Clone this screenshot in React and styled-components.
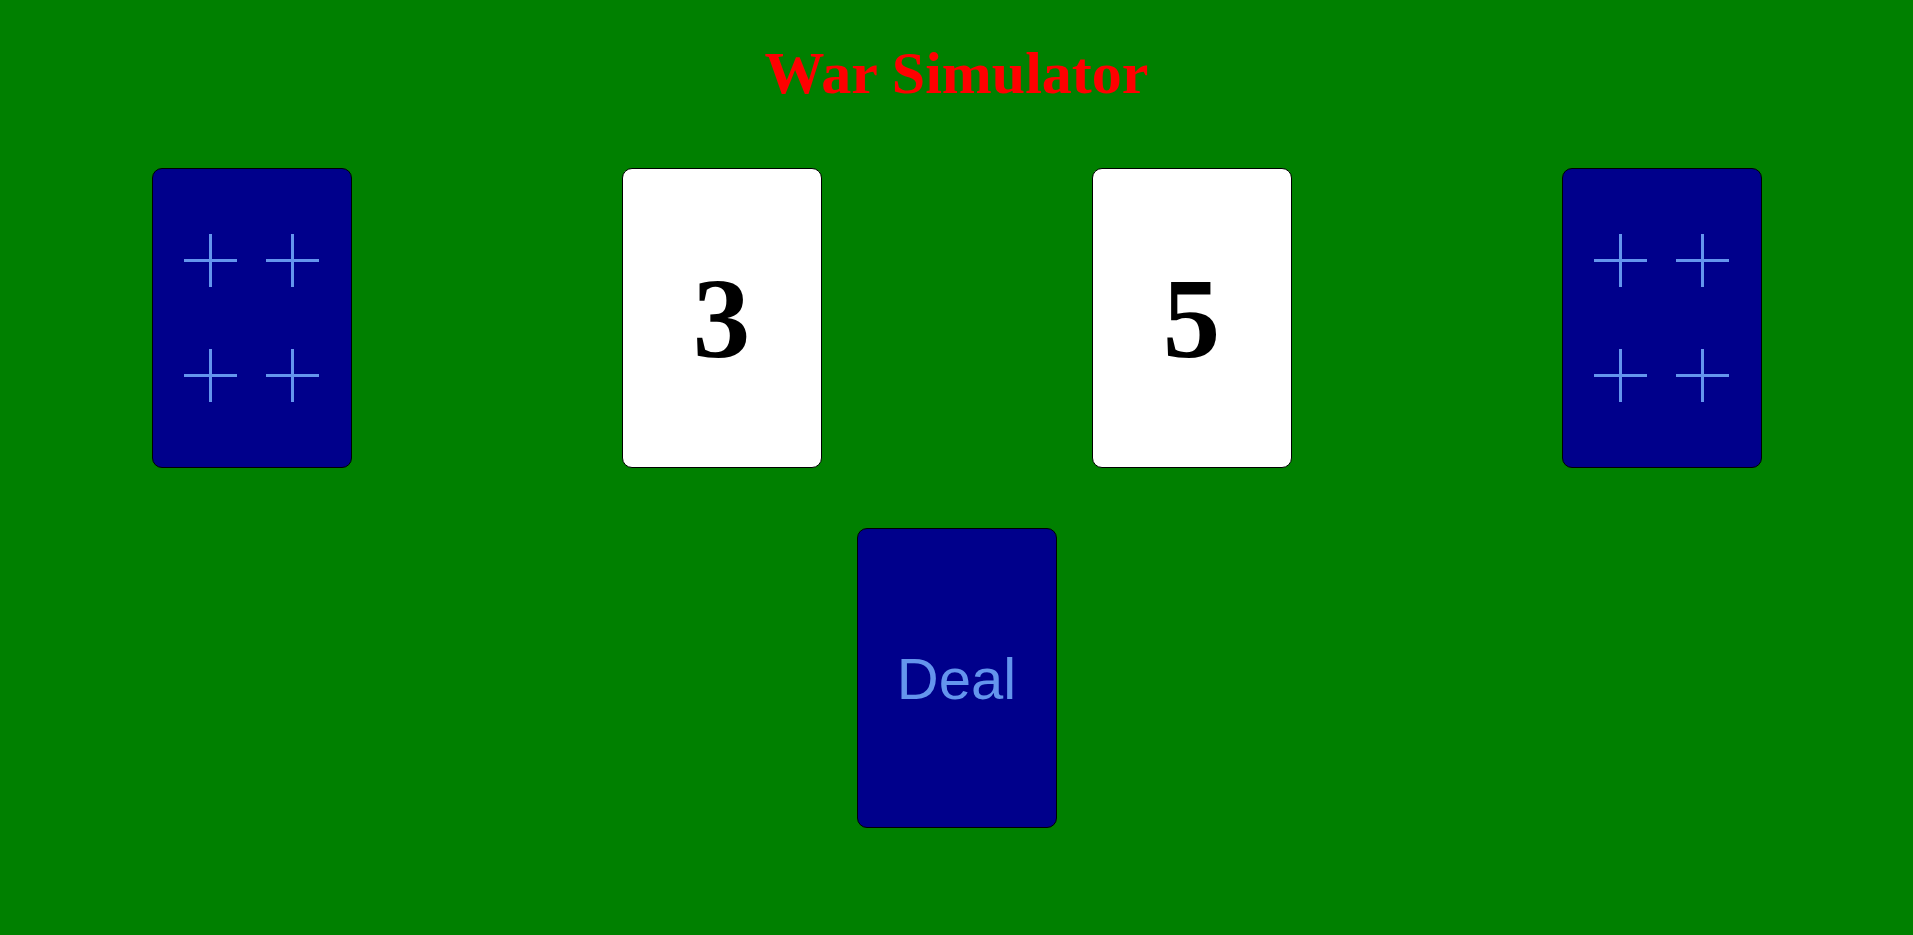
import React from "react";
import styled, { createGlobalStyle } from "styled-components";

const GlobalStyle = createGlobalStyle`
  html, body {
    margin: 0;
    padding: 0;
    background: #008000;
  }
  #root {
    min-height: 100vh;
  }
`;

const Table = styled.div`
  min-height: 100vh;
  background: #008000;
  padding-top: 38px;
  box-sizing: border-box;
  display: flex;
  flex-direction: column;
  align-items: center;
  row-gap: 60px;
`;

const Title = styled.h1`
  margin: 0;
  font-family: "Liberation Serif", "Times New Roman", serif;
  font-weight: bold;
  font-size: 60px;
  line-height: 70px;
  color: #ff0000;
`;

const Row = styled.div`
  display: flex;
  justify-content: center;
  column-gap: 270px;
`;

const Card = styled.div`
  width: 200px;
  height: 300px;
  box-sizing: border-box;
  border: 1px solid #000;
  border-radius: 10px;
  background: ${(p) => (p.$face ? "#ffffff" : "#00008b")};
  display: flex;
  align-items: center;
  justify-content: center;
`;

const Rank = styled.span`
  font-family: "Liberation Serif", "Times New Roman", serif;
  font-weight: bold;
  font-size: 115px;
  line-height: 1;
  color: #000;
`;

const DealButton = styled(Card).attrs({ as: "button" })`
  cursor: pointer;
  padding: 0;
  font-family: "Liberation Sans", Arial, sans-serif;
  font-size: 58px;
  color: #6495ed;
`;

const CrossGrid = styled.div`
  display: grid;
  grid-template-columns: 53px 53px;
  column-gap: 29px;
  row-gap: 62px;
`;

function Cross() {
  return (
    <svg width="53" height="53" viewBox="0 0 53 53">
      <line x1="0" y1="26.5" x2="53" y2="26.5" stroke="#6495ed" strokeWidth="3" />
      <line x1="26.5" y1="0" x2="26.5" y2="53" stroke="#6495ed" strokeWidth="3" />
    </svg>
  );
}

function CardBack() {
  return (
    <Card>
      <CrossGrid>
        <Cross />
        <Cross />
        <Cross />
        <Cross />
      </CrossGrid>
    </Card>
  );
}

function CardFace({ rank }) {
  return (
    <Card $face>
      <Rank>{rank}</Rank>
    </Card>
  );
}

export default function App() {
  return (
    <>
      <GlobalStyle />
      <Table>
        <Title>War Simulator</Title>
        <Row>
          <CardBack />
          <CardFace rank={3} />
          <CardFace rank={5} />
          <CardBack />
        </Row>
        <DealButton>Deal</DealButton>
      </Table>
    </>
  );
}
